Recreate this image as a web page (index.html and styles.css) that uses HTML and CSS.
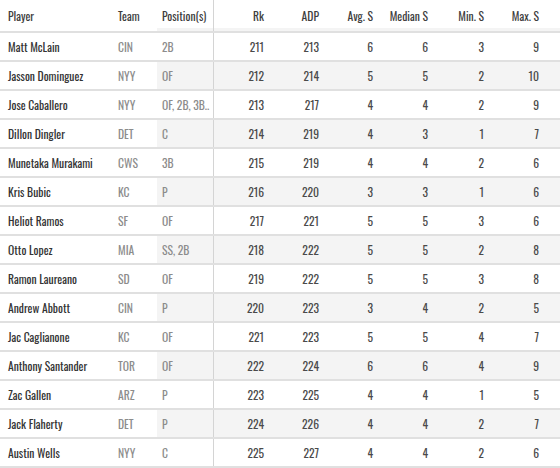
FILE: index.html
```html
<!DOCTYPE html>
<html>
<head>
<meta charset="utf-8">
<link rel="stylesheet" href="styles.css">
</head>
<body>
<table class="grid">
  <colgroup>
    <col class="c-player"><col class="c-team"><col class="c-pos">
    <col class="c-rk"><col class="c-adp"><col class="c-avg"><col class="c-med"><col class="c-min"><col class="c-max"><col class="c-fill">
  </colgroup>
  <thead>
    <tr>
      <th class="player">Player</th>
      <th class="team">Team</th>
      <th class="pos shade">Position(s)</th>
      <th class="num shade">Rk</th>
      <th class="num shade">ADP</th>
      <th class="num shade">Avg. S</th>
      <th class="num shade">Median S</th>
      <th class="num shade">Min. S</th>
      <th class="num shade">Max. S</th>
      <th class="fill shade"></th>
    </tr>
  </thead>
  <tbody>
    <tr><td class="player">Matt McLain</td><td class="team">CIN</td><td class="pos">2B</td><td class="num">211</td><td class="num">213</td><td class="num">6</td><td class="num">6</td><td class="num">3</td><td class="num">9</td><td class="fill"></td></tr>
    <tr><td class="player">Jasson Dominguez</td><td class="team">NYY</td><td class="pos">OF</td><td class="num">212</td><td class="num">214</td><td class="num">5</td><td class="num">5</td><td class="num">2</td><td class="num">10</td><td class="fill"></td></tr>
    <tr><td class="player">Jose Caballero</td><td class="team">NYY</td><td class="pos">OF, 2B, 3B..</td><td class="num">213</td><td class="num">217</td><td class="num">4</td><td class="num">4</td><td class="num">2</td><td class="num">9</td><td class="fill"></td></tr>
    <tr><td class="player">Dillon Dingler</td><td class="team">DET</td><td class="pos">C</td><td class="num">214</td><td class="num">219</td><td class="num">4</td><td class="num">3</td><td class="num">1</td><td class="num">7</td><td class="fill"></td></tr>
    <tr><td class="player">Munetaka Murakami</td><td class="team">CWS</td><td class="pos">3B</td><td class="num">215</td><td class="num">219</td><td class="num">4</td><td class="num">4</td><td class="num">2</td><td class="num">6</td><td class="fill"></td></tr>
    <tr><td class="player">Kris Bubic</td><td class="team">KC</td><td class="pos">P</td><td class="num">216</td><td class="num">220</td><td class="num">3</td><td class="num">3</td><td class="num">1</td><td class="num">6</td><td class="fill"></td></tr>
    <tr><td class="player">Heliot Ramos</td><td class="team">SF</td><td class="pos">OF</td><td class="num">217</td><td class="num">221</td><td class="num">5</td><td class="num">5</td><td class="num">3</td><td class="num">6</td><td class="fill"></td></tr>
    <tr><td class="player">Otto Lopez</td><td class="team">MIA</td><td class="pos">SS, 2B</td><td class="num">218</td><td class="num">222</td><td class="num">5</td><td class="num">5</td><td class="num">2</td><td class="num">8</td><td class="fill"></td></tr>
    <tr><td class="player">Ramon Laureano</td><td class="team">SD</td><td class="pos">OF</td><td class="num">219</td><td class="num">222</td><td class="num">5</td><td class="num">5</td><td class="num">3</td><td class="num">8</td><td class="fill"></td></tr>
    <tr><td class="player">Andrew Abbott</td><td class="team">CIN</td><td class="pos">P</td><td class="num">220</td><td class="num">223</td><td class="num">3</td><td class="num">4</td><td class="num">2</td><td class="num">5</td><td class="fill"></td></tr>
    <tr><td class="player">Jac Caglianone</td><td class="team">KC</td><td class="pos">OF</td><td class="num">221</td><td class="num">223</td><td class="num">5</td><td class="num">5</td><td class="num">4</td><td class="num">7</td><td class="fill"></td></tr>
    <tr><td class="player">Anthony Santander</td><td class="team">TOR</td><td class="pos">OF</td><td class="num">222</td><td class="num">224</td><td class="num">6</td><td class="num">6</td><td class="num">4</td><td class="num">9</td><td class="fill"></td></tr>
    <tr><td class="player">Zac Gallen</td><td class="team">ARZ</td><td class="pos">P</td><td class="num">223</td><td class="num">225</td><td class="num">4</td><td class="num">4</td><td class="num">1</td><td class="num">5</td><td class="fill"></td></tr>
    <tr><td class="player">Jack Flaherty</td><td class="team">DET</td><td class="pos">P</td><td class="num">224</td><td class="num">226</td><td class="num">4</td><td class="num">4</td><td class="num">2</td><td class="num">7</td><td class="fill"></td></tr>
    <tr><td class="player">Austin Wells</td><td class="team">NYY</td><td class="pos">C</td><td class="num">225</td><td class="num">227</td><td class="num">4</td><td class="num">4</td><td class="num">2</td><td class="num">6</td><td class="fill"></td></tr>
  </tbody>
</table>
</body>
</html>
```
FILE: styles.css
```css
html, body {
  margin: 0;
  padding: 0;
  background: #ffffff;
}

body {
  font-family: Oswald, "Roboto Condensed", "Liberation Sans Narrow", sans-serif;
  color: #333333;
}

.grid {
  width: 560px;
  border-collapse: collapse;
  table-layout: fixed;
  font-size: 11.6px;
}

.c-player { width: 113px; }
.c-team { width: 44px; }
.c-pos { width: 56px; }
.c-rk { width: 57px; }
.c-adp { width: 55px; }
.c-avg { width: 54px; }
.c-med { width: 55px; }
.c-min { width: 56px; }
.c-max { width: 55px; }
.c-fill { width: 15px; }

.grid th,
.grid td {
  padding: 0;
  white-space: nowrap;
  overflow: hidden;
  border-bottom: 2px solid #e0e0e0;
}

.grid th {
  height: 31px;
  font-weight: 400;
  color: #3d3d3d;
  text-align: left;
  vertical-align: middle;
}

.grid th.shade {
  box-shadow: inset 0 -3px 0 #f4f4f4;
}

.grid td {
  height: 27px;
  vertical-align: middle;
}

.grid .player {
  padding-left: 8px;
}

.grid td.player {
  font-weight: 400;
  color: #333333;
}

.grid .team {
  padding-left: 5px;
}

.grid .pos {
  padding-left: 5px;
  border-right: 1px solid #d4d4d4;
}

.grid td.team,
.grid td.pos {
  font-weight: 400;
  color: #8c8c8c;
}

.grid .num {
  text-align: right;
  padding-right: 6px;
}

.grid td.num {
  font-weight: 400;
  color: #4a4a4a;
}

.grid tbody tr:nth-child(even) td.pos,
.grid tbody tr:nth-child(even) td.num,
.grid tbody tr:nth-child(even) td.fill {
  background: #f4f4f4;
}
```
